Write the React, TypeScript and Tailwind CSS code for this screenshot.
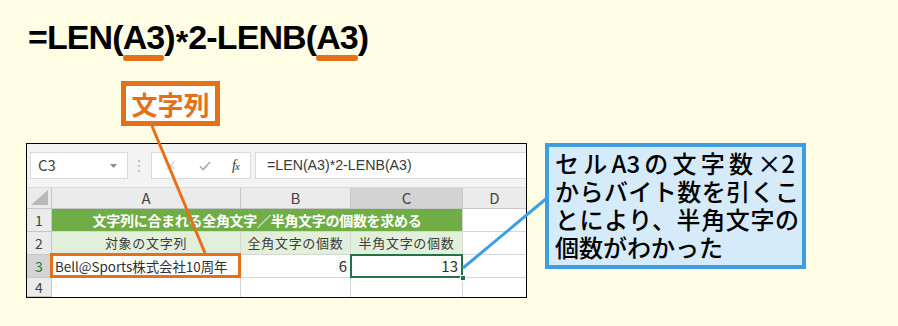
import type { ReactNode } from 'react';

const JP = "font-['Noto_Sans_CJK_JP','Noto_Sans',sans-serif]";

function Ref({ children }: { children: ReactNode }) {
  return (
    <span className="relative">
      {children}
      <span className="absolute left-0 w-full top-[37px] h-[6px] rounded-full bg-[#e5701b]" />
    </span>
  );
}

function Cell({ children, className = '' }: { children?: ReactNode; className?: string }) {
  return (
    <div className={`relative flex items-center border-r border-b border-[#d6d6d6] ${className}`}>
      {children}
    </div>
  );
}

function RowHead({ n, active }: { n: number; active?: boolean }) {
  return (
    <div
      className={`flex items-center justify-center border-r border-b border-[#c6c6c6] text-[14px] ${
        active ? 'bg-[#d3d3d3] text-[#217346]' : 'bg-[#ebebeb] text-[#444]'
      }`}
    >
      {n}
    </div>
  );
}

function ColHead({ label, active, last }: { label: string; active?: boolean; last?: boolean }) {
  return (
    <div
      className={`flex items-center justify-center border-b border-[#c6c6c6] text-[15px] text-[#444] ${
        last ? '' : 'border-r'
      } ${active ? 'bg-[#d3d3d3]' : 'bg-[#ebebeb]'}`}
    >
      {label}
    </div>
  );
}

function FormulaBar() {
  return (
    <div className="flex items-center h-[44px] bg-[#f3f3f3] pl-[3px] border-b border-[#dcdcdc]">
      {/* name box */}
      <div className="relative flex items-center w-[98px] h-[27px] bg-white border border-[#dadada] pl-[7px] text-[15px] text-[#444]">
        C3
        <svg className="absolute right-[10px] top-[11px]" width="7" height="4" viewBox="0 0 7 4">
          <path d="M0 0h7L3.5 4z" fill="#8a8a8a" />
        </svg>
      </div>
      {/* grip dots */}
      <svg className="ml-[9px]" width="4" height="14" viewBox="0 0 4 14">
        <circle cx="2" cy="2" r="1.2" fill="#c4c4c4" />
        <circle cx="2" cy="7" r="1.2" fill="#c4c4c4" />
        <circle cx="2" cy="12" r="1.2" fill="#c4c4c4" />
      </svg>
      {/* cancel / enter / fx */}
      <div className="ml-[10px] flex items-center w-[100px] h-[27px] bg-white border border-[#dadada]">
        <svg className="ml-[14px]" width="9" height="9" viewBox="0 0 9 9">
          <path d="M1 1l7 7M8 1L1 8" stroke="#cfcfcf" strokeWidth="1.3" />
        </svg>
        <svg className="ml-[24px]" width="12" height="10" viewBox="0 0 12 10">
          <path d="M1 5.5l3.2 3L11 1" stroke="#a9a9a9" strokeWidth="1.6" fill="none" />
        </svg>
        <span className="ml-[21px] italic text-[14px] text-[#333] font-['Liberation_Serif',serif] tracking-[-1px]">
          f<span className="text-[11px]">x</span>
        </span>
      </div>
      {/* formula input */}
      <div className="ml-[4px] flex-1 flex items-center h-[27px] bg-white border-y border-l border-[#dadada] pl-[11px] text-[14.2px] text-[#3a3a3a] font-['Liberation_Sans',Arial,sans-serif]">
        =LEN(A3)*2-LENB(A3)
      </div>
    </div>
  );
}

function Sheet() {
  return (
    <div className={`w-[501px] h-[155px] border border-black bg-white ${JP}`}>
      <FormulaBar />
      <div className="grid grid-cols-[25px_189px_110px_112px_63px] grid-rows-[21px_23px_23px_23px_19px]">
        {/* header row */}
        <div className="relative bg-[#ebebeb] border-r border-b border-[#c6c6c6]">
          <svg className="absolute right-[3px] bottom-[3px]" width="17" height="15" viewBox="0 0 17 15">
            <path d="M0 15L17 0v15z" fill="#b9b9b9" />
          </svg>
        </div>
        <ColHead label="A" />
        <ColHead label="B" />
        <ColHead label="C" active />
        <ColHead label="D" last />

        {/* row 1 */}
        <RowHead n={1} />
        <div className="col-span-3 flex items-center justify-center bg-[#70ad47] border-r border-b border-[#d6d6d6] text-white font-bold text-[14px] tracking-[-0.3px]">
          文字列に合まれる全角文字／半角文字の個数を求める
        </div>
        <div className="border-b border-[#d6d6d6]" />

        {/* row 2 */}
        <RowHead n={2} />
        <Cell className="justify-center bg-[#e2efda] text-[13px] tracking-[0.7px] text-[#3c3c3c]">対象の文字列</Cell>
        <Cell className="justify-center bg-[#e2efda] text-[13px] tracking-[0.7px] text-[#3c3c3c]">全角文字の個数</Cell>
        <Cell className="justify-center bg-[#e2efda] text-[13px] tracking-[0.7px] text-[#3c3c3c]">半角文字の個数</Cell>
        <div className="border-b border-[#d6d6d6]" />

        {/* row 3 */}
        <RowHead n={3} active />
        <Cell className="pl-[3px] text-[13.4px] text-[#2e2e2e]">
          Bell@Sports株式会社10周年
          <div className="absolute z-10 -left-[2px] -right-[1px] -top-[2px] -bottom-[1px] border-[3px] border-[#e5701b]" />
        </Cell>
        <Cell className="justify-end pr-[3px] text-[15px] text-[#2e2e2e]">6</Cell>
        <Cell className="justify-end pr-[4px] text-[15px] text-[#2e2e2e]">
          13
          <div className="absolute z-10 -left-[1px] -right-[1px] -top-[1px] -bottom-[1px] border-2 border-[#217346]" />
          <div className="absolute z-10 -right-[4px] -bottom-[4px] w-[6px] h-[6px] bg-[#217346] border border-white" />
        </Cell>
        <div className="border-b border-[#d6d6d6]" />

        {/* row 4 */}
        <RowHead n={4} />
        <div className="border-r border-[#d6d6d6]" />
        <div className="border-r border-[#d6d6d6]" />
        <div className="border-r border-[#d6d6d6]" />
        <div />
      </div>
    </div>
  );
}

export default function App() {
  return (
    <div className="relative w-[898px] h-[326px] overflow-hidden bg-[#fffde4]">
      {/* formula title */}
      <div className="pl-[28px] pt-[20px] h-[54px] whitespace-nowrap text-[34px] leading-[34px] font-bold tracking-[-0.9px] text-black font-['Liberation_Sans',Arial,sans-serif]">
        =LEN(<Ref>A3</Ref>)<span className="relative top-[4px] mx-[1px] text-[32px]">*</span>2-LENB(<Ref>A3</Ref>)
      </div>

      {/* label */}
      <div
        className={`ml-[121px] mt-[27px] w-[99px] h-[45px] flex items-center justify-center border-[5px] border-[#e5701b] bg-white text-[26px] leading-none font-bold text-[#e5701b] ${JP}`}
      >
        文字列
      </div>

      <div className="mt-[17px] flex items-start">
        <div className="ml-[26px]">
          <Sheet />
        </div>

        {/* callout */}
        <div
          className={`ml-[18px] w-[261px] h-[126px] border-[4px] border-[#3d9fe2] bg-[#d5ebf9] pl-[6px] pr-[3px] pt-[2px] text-[24px] leading-[28px] font-medium text-black ${JP}`}
        >
          <div className="text-justify [text-align-last:justify] pr-[4px]">セルA3の文字数×2</div>
          <div className="text-justify [text-align-last:justify]">からバイト数を引くこ</div>
          <div className="text-justify [text-align-last:justify]">とにより、半角文字の</div>
          <div>個数がわかった</div>
        </div>
      </div>

      {/* leader lines */}
      <svg className="absolute inset-0 z-20 pointer-events-none" width="898" height="326" viewBox="0 0 898 326">
        <line x1="152" y1="126" x2="205" y2="253" stroke="#e5701b" strokeWidth="3" />
        <line x1="463" y1="268" x2="547" y2="198" stroke="#3d9fe2" strokeWidth="3" />
      </svg>
    </div>
  );
}
